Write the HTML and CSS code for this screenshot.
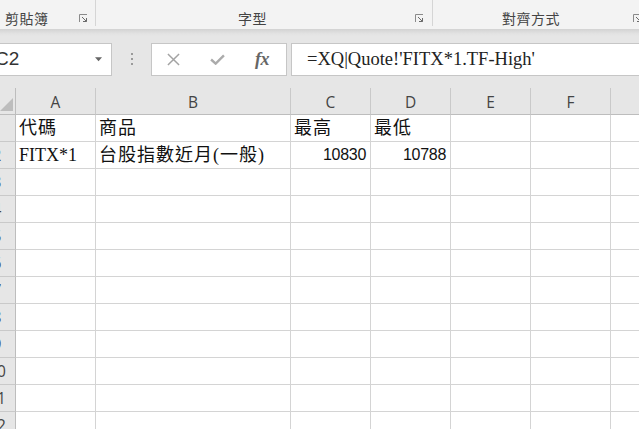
FILE: index.html
```html
<!DOCTYPE html>
<html lang="zh-Hant">
<head>
<meta charset="utf-8">
<title>Excel</title>
<link rel="stylesheet" href="styles.css">
</head>
<body>
<div class="app">
  <div class="ribbon">
    <div class="group g1">
      <span class="glabel">剪貼簿</span>
      <svg class="launcher" viewBox="0 0 9 9"><path d="M0.5 8 V0.5 H8" fill="none" stroke="#8a8a8a"/><path d="M3 3 L7.5 7.5 M7.5 4 V7.5 H4" fill="none" stroke="#6a6a6a"/></svg>
    </div>
    <div class="group g2">
      <span class="glabel">字型</span>
      <svg class="launcher" viewBox="0 0 9 9"><path d="M0.5 8 V0.5 H8" fill="none" stroke="#8a8a8a"/><path d="M3 3 L7.5 7.5 M7.5 4 V7.5 H4" fill="none" stroke="#6a6a6a"/></svg>
    </div>
    <div class="group g3">
      <span class="glabel">對齊方式</span>
      <svg class="launcher" viewBox="0 0 9 9"><path d="M0.5 8 V0.5 H8" fill="none" stroke="#8a8a8a"/><path d="M3 3 L7.5 7.5 M7.5 4 V7.5 H4" fill="none" stroke="#6a6a6a"/></svg>
    </div>
  </div>
  <div class="shade"></div>
  <div class="fbar">
    <div class="namebox">
      <span class="nbtext">C2</span>
      <svg class="nbarrow" viewBox="0 0 8 5"><path d="M0 0 H8 L4 4.5 Z" fill="#666"/></svg>
    </div>
    <div class="grip"><i></i><i></i><i></i></div>
    <div class="fbtns">
      <svg class="ico-x" viewBox="0 0 14 14"><path d="M1 1 L13 13 M13 1 L1 13" stroke="#a3a3a3" stroke-width="1.6" fill="none"/></svg>
      <svg class="ico-ok" viewBox="0 0 16 12"><path d="M1 6 L6 10.5 L15 1.5" stroke="#ababab" stroke-width="2.6" fill="none"/></svg>
      <span class="fx">fx</span>
    </div>
    <div class="finput">=XQ|Quote!'FITX*1.TF-High'</div>
  </div>
  <div class="sheet">
    <div class="hd corner"><svg class="tri" viewBox="0 0 14 14"><path d="M14 0 V14 H0 Z" fill="#bdbdbd"/></svg></div>
    <div class="hd col">A</div>
    <div class="hd col">B</div>
    <div class="hd col">C</div>
    <div class="hd col">D</div>
    <div class="hd col">E</div>
    <div class="hd col">F</div>
    <div class="hd col"></div>

    <div class="hd row">1</div>
    <div class="c"><span class="cjk">代碼</span></div>
    <div class="c"><span class="cjk">商品</span></div>
    <div class="c"><span class="cjk">最高</span></div>
    <div class="c"><span class="cjk">最低</span></div>
    <div class="c"></div><div class="c"></div><div class="c"></div>

    <div class="hd row">2</div>
    <div class="c"><span class="lat">FITX*1</span></div>
    <div class="c"><span class="cjk">台股指數近月(一般)</span></div>
    <div class="c num">10830</div>
    <div class="c num">10788</div>
    <div class="c"></div><div class="c"></div><div class="c"></div>

    <div class="hd row">3</div><div class="c"></div><div class="c"></div><div class="c"></div><div class="c"></div><div class="c"></div><div class="c"></div><div class="c"></div>
    <div class="hd row">4</div><div class="c"></div><div class="c"></div><div class="c"></div><div class="c"></div><div class="c"></div><div class="c"></div><div class="c"></div>
    <div class="hd row">5</div><div class="c"></div><div class="c"></div><div class="c"></div><div class="c"></div><div class="c"></div><div class="c"></div><div class="c"></div>
    <div class="hd row">6</div><div class="c"></div><div class="c"></div><div class="c"></div><div class="c"></div><div class="c"></div><div class="c"></div><div class="c"></div>
    <div class="hd row">7</div><div class="c"></div><div class="c"></div><div class="c"></div><div class="c"></div><div class="c"></div><div class="c"></div><div class="c"></div>
    <div class="hd row">8</div><div class="c"></div><div class="c"></div><div class="c"></div><div class="c"></div><div class="c"></div><div class="c"></div><div class="c"></div>
    <div class="hd row">9</div><div class="c"></div><div class="c"></div><div class="c"></div><div class="c"></div><div class="c"></div><div class="c"></div><div class="c"></div>
    <div class="hd row">10</div><div class="c"></div><div class="c"></div><div class="c"></div><div class="c"></div><div class="c"></div><div class="c"></div><div class="c"></div>
    <div class="hd row">11</div><div class="c"></div><div class="c"></div><div class="c"></div><div class="c"></div><div class="c"></div><div class="c"></div><div class="c"></div>
    <div class="hd row">12</div><div class="c"></div><div class="c"></div><div class="c"></div><div class="c"></div><div class="c"></div><div class="c"></div><div class="c"></div>
  </div>
</div>
</body>
</html>
```
FILE: styles.css
```css
* { box-sizing: border-box; }
html, body { margin: 0; padding: 0; background: #ffffff; }
body { width: 639px; height: 429px; overflow: hidden; }
.app {
  width: 639px; height: 429px; overflow: hidden;
  background: #e6e6e6;
  font-family: "Open Sans", "Noto Sans CJK TC", sans-serif;
}

/* ribbon */
.ribbon { display: flex; height: 29px; background: #f3f3f3; overflow: hidden; }
.group {
  display: flex; align-items: center;
  height: 26px; padding-top: 10px;
  border-right: 1px solid #d5d5d5;
  flex: none;
}
.glabel {
  flex: none; white-space: nowrap;
  font-family: "Noto Sans CJK TC", sans-serif;
  font-size: 14px; line-height: 16px; color: #444;
  letter-spacing: 0.5px;
}
.launcher { flex: none; width: 9px; height: 9px; margin-left: auto; margin-top: 1px; }
.g1 { width: 96px; padding-left: 5px; padding-right: 7px; }
.g2 { width: 337px; padding-left: 142px; padding-right: 8px; }
.g3 { width: 240px; padding-left: 69px; padding-right: 0; border-right: none; }
.g3 .launcher { margin-left: 73px; }

.shade { height: 7px; background: linear-gradient(#d2d2d2, #e3e3e3 70%, #e6e6e6); }

/* formula bar */
.fbar { display: flex; align-items: center; height: 52px; padding-bottom: 6px; padding-top: 0; }
.fbar > * { height: 33px; flex: none; }
.namebox {
  width: 122px; margin-left: -10px;
  background: #fff; border: 1px solid #c6c6c6;
  display: flex; align-items: center; padding-left: 4px; padding-right: 9px;
}
.nbtext { font-family: "Liberation Sans", sans-serif; font-size: 19px; color: #333; font-weight: 300; }
.nbarrow { width: 7px; height: 5px; margin-left: auto; }
.grip { width: 39px; display: flex; flex-direction: column; align-items: center; justify-content: center; gap: 3px; }
.grip i { display: block; width: 2px; height: 2px; background: #9a9a9a; }
.fbtns {
  width: 136px; background: #fff; border: 1px solid #c6c6c6;
  display: flex; align-items: center; padding-left: 15px;
}
.ico-x { width: 13px; height: 13px; }
.ico-ok { width: 15px; height: 11px; margin-left: 30px; }
.fx {
  margin-left: 30px;
  font-family: "Liberation Serif", serif; font-style: italic; font-weight: bold;
  font-size: 18px; color: #666; letter-spacing: -0.5px;
}
.finput {
  margin-left: 4px; flex: 1 0 auto;
  background: #fff; border: 1px solid #c6c6c6; border-right: none;
  display: flex; align-items: center; padding-left: 15px; padding-top: 1px;
  font-family: "Liberation Serif", serif; font-size: 18.5px; color: #222;
  white-space: nowrap;
}

/* sheet */
.sheet {
  display: grid;
  grid-template-columns: 37px 80px 195px 80px 80px 80px 80px 80px;
  grid-auto-rows: 27px;
  margin-left: -21px;
  width: 712px;
  background: #fff;
}
.hd {
  background: #e6e6e6;
  font-family: "Open Sans", sans-serif; font-size: 15.5px; color: #444;
  display: flex; align-items: center; justify-content: center;
  border-right: 1px solid #c9c9c9; border-bottom: 1px solid #c9c9c9;
}
.corner { justify-content: flex-end; align-items: flex-end; padding: 0 2px 3px 0; border-bottom-color: #bdbdbd; border-right-color: #bdbdbd; }
.tri { width: 13px; height: 13px; }
.col { border-bottom-color: #bdbdbd; padding-top: 1px; }
.row { border-right-color: #bdbdbd; }
.c {
  border-right: 1px solid #d4d4d4; border-bottom: 1px solid #d4d4d4;
  display: flex; align-items: flex-end; padding: 0 3px 1px 3px;
  font-family: "Liberation Serif", "Noto Sans CJK TC", serif;
  font-size: 18px; color: #111; white-space: nowrap; line-height: 24px;
}
.cjk { letter-spacing: 1px; }
.num {
  justify-content: flex-end; padding-right: 4px;
  font-family: "Liberation Sans", sans-serif; font-size: 16px; font-weight: 300;
  letter-spacing: -0.3px;
}
```
